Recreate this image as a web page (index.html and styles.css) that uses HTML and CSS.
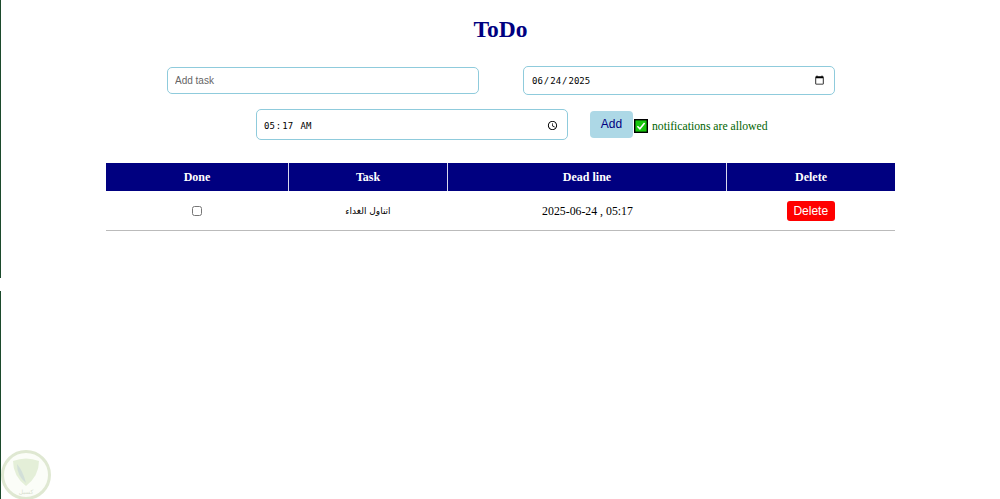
FILE: index.html
```html
<!DOCTYPE html>
<html lang="en">
<head>
<meta charset="utf-8">
<title>ToDo</title>
<link rel="stylesheet" href="styles.css">
</head>
<body>
<div class="edge edge-top"></div>
<div class="edge edge-bottom"></div>
<main class="page">
  <h1 class="title">ToDo</h1>
  <form class="form">
    <div class="row row-first">
      <input class="field field-text" type="text" placeholder="Add task">
      <input class="field field-date" type="date" value="2025-06-24">
    </div>
    <div class="row row-second">
      <input class="field field-time" type="time" value="05:17">
      <button class="add" type="button">Add</button>
      <span class="notice">
        <svg class="notice-icon" viewBox="0 0 14 14" aria-hidden="true">
          <rect x="0.7" y="0.7" width="12.6" height="12.6" fill="#16c60c" stroke="#000" stroke-width="1.4"/>
          <path d="M3.4 7.2 L5.9 9.7 L10.6 4" fill="none" stroke="#fff" stroke-width="1.6"/>
        </svg>
        <span class="notice-text">notifications are allowed</span>
      </span>
    </div>
  </form>
  <table class="tasks">
    <thead>
      <tr>
        <th class="col-done">Done</th>
        <th class="col-task">Task</th>
        <th class="col-deadline">Dead line</th>
        <th class="col-delete">Delete</th>
      </tr>
    </thead>
    <tbody>
      <tr>
        <td><input class="check" type="checkbox"></td>
        <td class="arabic" dir="rtl">اتناول الغداء</td>
        <td class="deadline">2025-06-24 , 05:17</td>
        <td><button class="delete" type="button">Delete</button></td>
      </tr>
    </tbody>
  </table>
</main>
<svg class="badge" viewBox="0 0 52 52" aria-hidden="true">
  <circle cx="26" cy="26" r="23.5" fill="#fbfdf8" stroke="#dfe8d2" stroke-width="3"/>
  <path d="M13 12 Q26 7 39 12 Q39 27 26 37 Q13 27 13 12 Z" fill="#e4efd8"/>
  <path d="M17 15 Q23 22 26 34 Q17 27 17 15 Z" fill="#d2dfd8"/>
  <text class="badge-text" x="26" y="45" text-anchor="middle">كسبل</text>
</svg>
</body>
</html>
```
FILE: styles.css
```css
html, body {
  margin: 0;
  padding: 0;
  background: #fff;
  height: 499px;
  overflow: hidden;
}
body {
  font-family: "Liberation Serif", serif;
  color: #000;
}
.edge {
  position: absolute;
  left: 0;
  width: 1px;
  background: #1c4a2c;
}
.edge-top { top: 0; height: 278px; }
.edge-bottom { top: 291px; height: 208px; }
.page {
  padding: 0 105px 0 106px;
}
.title {
  margin: 0;
  padding-top: 16px;
  height: 50px;
  box-sizing: border-box;
  font-size: 23.5px;
  line-height: 27px;
  font-weight: bold;
  color: #000080;
  text-align: center;
}
.form {
  display: flex;
  flex-direction: column;
}
.row {
  display: flex;
  align-items: center;
}
.row-first {
  margin-top: 16px;
  margin-left: 61px;
  gap: 44px;
  height: 29px;
}
.row-second {
  margin-top: 14px;
  margin-left: 150px;
  height: 31px;
}
.field {
  box-sizing: border-box;
  width: 312px;
  margin: 0;
  padding: 0 7px;
  border: 1px solid #8fcbdc;
  border-radius: 5px;
  background: #fff;
  outline: none;
  font-size: 10px;
}
.field-text {
  height: 27px;
  font-family: "Liberation Sans", sans-serif;
}
.field-text::placeholder { color: #666; }
.field-date {
  height: 29px;
  padding: 0 8px 0 7px;
  font-family: "DejaVu Sans Mono", monospace;
  font-size: 9px;
}
.field-time {
  height: 31px;
  padding: 2px 8px 0 6px;
  font-family: "DejaVu Sans Mono", monospace;
  font-size: 9px;
}
.field-date::-webkit-calendar-picker-indicator,
.field-time::-webkit-calendar-picker-indicator {
  width: 11px;
  height: 11px;
  padding: 0;
  margin: 0 1px 0 0;
}
.add {
  box-sizing: border-box;
  width: 43px;
  height: 27px;
  margin: 0 0 0 22px;
  padding: 0 0 2px;
  border: 0;
  border-radius: 4px;
  background: #add8e6;
  color: #000080;
  font-family: "Liberation Sans", sans-serif;
  font-size: 12px;
}
.notice {
  display: flex;
  align-items: center;
  margin-left: 1px;
  padding-top: 3px;
}
.notice-icon {
  width: 14px;
  height: 14px;
  flex: none;
}
.notice-text {
  margin-left: 4px;
  color: #006400;
  font-size: 11.7px;
}
.tasks {
  width: 789px;
  margin-top: 23px;
  border-collapse: collapse;
  table-layout: fixed;
}
.tasks th {
  height: 28px;
  padding: 0;
  background: #000080;
  color: #fff;
  font-size: 12px;
  font-weight: bold;
  text-align: center;
  border-left: 1px solid #d8d8ee;
}
.tasks th:first-child { border-left: 0; }
.col-done { width: 182px; }
.col-task { width: 158px; }
.col-deadline { width: 278px; }
.tasks td {
  height: 39px;
  padding: 0;
  font-size: 12px;
  text-align: center;
  border-bottom: 1px solid #bbb;
}
.tasks td.deadline {
  height: 38px;
  font-size: 11.8px;
  padding: 1px 0 0 1px;
}
.tasks td.arabic {
  font-family: "DejaVu Sans", sans-serif;
  font-size: 9px;
}
.check {
  width: 10px;
  height: 10px;
  margin: 0;
  vertical-align: middle;
}
.delete {
  box-sizing: border-box;
  width: 48px;
  height: 20px;
  margin: 0;
  padding: 0;
  border: 0;
  border-radius: 3px;
  background: #f00;
  color: #fff;
  font-family: "Liberation Sans", sans-serif;
  font-size: 12px;
}
.badge {
  position: absolute;
  left: 0;
  top: 449px;
  width: 52px;
  height: 52px;
}
.badge-text {
  font-family: "DejaVu Sans", sans-serif;
  font-size: 6px;
  fill: #d8dfcf;
}
```
